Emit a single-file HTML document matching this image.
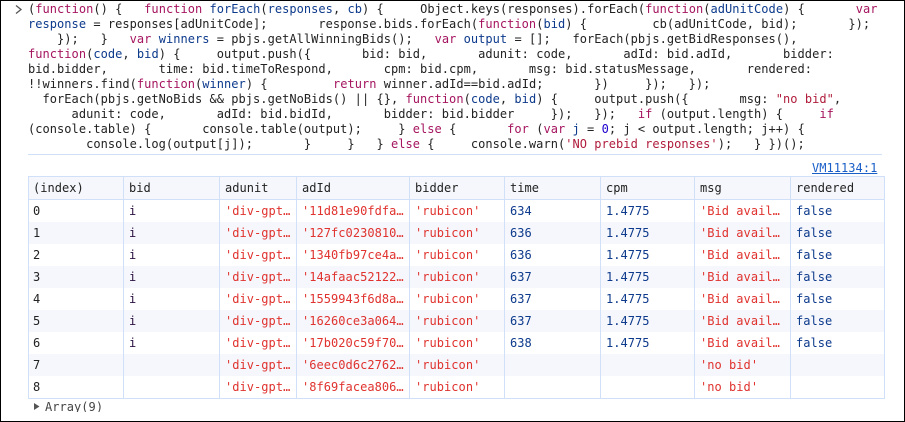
<!DOCTYPE html>
<html><head><meta charset="utf-8"><style>
html,body{margin:0;padding:0;background:#fff}
body{width:905px;height:422px;position:relative;overflow:hidden;font-family:"DejaVu Sans Mono","Liberation Mono",monospace;font-size:12px;letter-spacing:.035px;color:#222}
#frame{position:absolute;left:0;top:0;width:903px;height:420px;border:1px solid #000;z-index:5;pointer-events:none}
.l{position:absolute;left:28px;height:15px;line-height:15px;white-space:pre}
.k{color:#a5155f}.v{color:#0d3a8c}.s{color:#b01c3c}.n{color:#1c00cf}
#sep{position:absolute;left:28px;top:154px;width:854px;height:1px;background:#d0e0f8}
#link{position:absolute;left:812px;top:161px;line-height:15px;color:#1a5fc8;text-decoration:underline}
table{position:absolute;left:28px;top:176px;border-collapse:separate;border-spacing:0;table-layout:fixed;width:857px;border-right:1px solid #d0e0f8;border-bottom:1px solid #d0e0f8}
th,td{border-left:1px solid #d0e0f8;padding:0 0 0 5px;white-space:pre;overflow:hidden;font-weight:normal;text-align:left;box-sizing:border-box;height:22px;line-height:21px}
th{height:24px;background:#f5f7fc;border-top:1px solid #d0e0f8;border-bottom:1px solid #d0e0f8;color:#222}
tr:nth-child(odd) td{background:#f5f7fc}
td.s{color:#e0322e}td.b{color:#0d3a8c}td.i{color:#2a1040}
th:first-child,td:first-child{padding-left:4px}
#arr{position:absolute;left:45px;top:400px;height:12px;line-height:15px;overflow:hidden;color:#444}
</style></head><body>
<div id="frame"></div>
<svg style="position:absolute;left:14px;top:4px" width="9" height="11"><path d="M2 1.5 L7 5.5 L2 9.5" fill="none" stroke="#555" stroke-width="1.3"/></svg>
<div class="l" style="top:2px">(<span class="k">function</span>() {   <span class="k">function</span> <span class="v">forEach</span>(<span class="v">responses</span>, <span class="v">cb</span>) {     Object.keys(responses).forEach(<span class="k">function</span>(<span class="v">adUnitCode</span>) {       <span class="k">var</span></div>
<div class="l" style="top:17px"><span class="v">response</span> = responses[adUnitCode];       response.bids.forEach(<span class="k">function</span>(<span class="v">bid</span>) {         cb(adUnitCode, bid);       });</div>
<div class="l" style="top:32px">    });   }   <span class="k">var</span> <span class="v">winners</span> = pbjs.getAllWinningBids();   <span class="k">var</span> <span class="v">output</span> = [];   forEach(pbjs.getBidResponses(),</div>
<div class="l" style="top:47px"><span class="k">function</span>(<span class="v">code</span>, <span class="v">bid</span>) {     output.push({       bid: bid,       adunit: code,       adId: bid.adId,       bidder:</div>
<div class="l" style="top:62px">bid.bidder,       time: bid.timeToRespond,       cpm: bid.cpm,       msg: bid.statusMessage,       rendered:</div>
<div class="l" style="top:77px">!!winners.find(<span class="k">function</span>(<span class="v">winner</span>) {         <span class="k">return</span> winner.adId==bid.adId;       })     });   });</div>
<div class="l" style="top:92px">  forEach(pbjs.getNoBids &amp;&amp; pbjs.getNoBids() || {}, <span class="k">function</span>(<span class="v">code</span>, <span class="v">bid</span>) {     output.push({       msg: <span class="s">"no bid"</span>,</div>
<div class="l" style="top:107px">      adunit: code,       adId: bid.bidId,       bidder: bid.bidder     });   });   <span class="k">if</span> (output.length) {     <span class="k">if</span></div>
<div class="l" style="top:122px">(console.table) {       console.table(output);     } <span class="k">else</span> {       <span class="k">for</span> (<span class="k">var</span> <span class="v">j</span> = <span class="n">0</span>; j &lt; output.length; j++) {</div>
<div class="l" style="top:137px">        console.log(output[j]);       }     }   } <span class="k">else</span> {     console.warn(<span class="s">'NO prebid responses'</span>);   } })();</div>
<div id="sep"></div>
<div id="link">VM11134:1</div>
<table>
<colgroup><col style="width:95px"><col style="width:96px"><col style="width:77px"><col style="width:113px"><col style="width:95px"><col style="width:96px"><col style="width:94px"><col style="width:96px"><col style="width:94px"></colgroup>
<tbody>
<tr><th>(index)</th><th>bid</th><th>adunit</th><th>adId</th><th>bidder</th><th>time</th><th>cpm</th><th>msg</th><th>rendered</th></tr>
<tr><td>0</td><td class="i">i</td><td class="s">'div-gpt…</td><td class="s">'11d81e90fdfa…</td><td class="s">'rubicon'</td><td class="b">634</td><td class="b">1.4775</td><td class="s">'Bid avail…</td><td class="b">false</td></tr>
<tr><td>1</td><td class="i">i</td><td class="s">'div-gpt…</td><td class="s">'127fc0230810…</td><td class="s">'rubicon'</td><td class="b">636</td><td class="b">1.4775</td><td class="s">'Bid avail…</td><td class="b">false</td></tr>
<tr><td>2</td><td class="i">i</td><td class="s">'div-gpt…</td><td class="s">'1340fb97ce4a…</td><td class="s">'rubicon'</td><td class="b">636</td><td class="b">1.4775</td><td class="s">'Bid avail…</td><td class="b">false</td></tr>
<tr><td>3</td><td class="i">i</td><td class="s">'div-gpt…</td><td class="s">'14afaac52122…</td><td class="s">'rubicon'</td><td class="b">637</td><td class="b">1.4775</td><td class="s">'Bid avail…</td><td class="b">false</td></tr>
<tr><td>4</td><td class="i">i</td><td class="s">'div-gpt…</td><td class="s">'1559943f6d8a…</td><td class="s">'rubicon'</td><td class="b">637</td><td class="b">1.4775</td><td class="s">'Bid avail…</td><td class="b">false</td></tr>
<tr><td>5</td><td class="i">i</td><td class="s">'div-gpt…</td><td class="s">'16260ce3a064…</td><td class="s">'rubicon'</td><td class="b">637</td><td class="b">1.4775</td><td class="s">'Bid avail…</td><td class="b">false</td></tr>
<tr><td>6</td><td class="i">i</td><td class="s">'div-gpt…</td><td class="s">'17b020c59f70…</td><td class="s">'rubicon'</td><td class="b">638</td><td class="b">1.4775</td><td class="s">'Bid avail…</td><td class="b">false</td></tr>
<tr><td>7</td><td></td><td class="s">'div-gpt…</td><td class="s">'6eec0d6c2762…</td><td class="s">'rubicon'</td><td></td><td></td><td class="s">'no bid'</td><td></td></tr>
<tr><td>8</td><td></td><td class="s">'div-gpt…</td><td class="s">'8f69facea806…</td><td class="s">'rubicon'</td><td></td><td></td><td class="s">'no bid'</td><td></td></tr>
</tbody></table>
<svg style="position:absolute;left:33px;top:402px" width="8" height="10"><path d="M1 1 L6.5 4.5 L1 8 Z" fill="#555"/></svg>
<div id="arr">Array(9)</div>
</body></html>
